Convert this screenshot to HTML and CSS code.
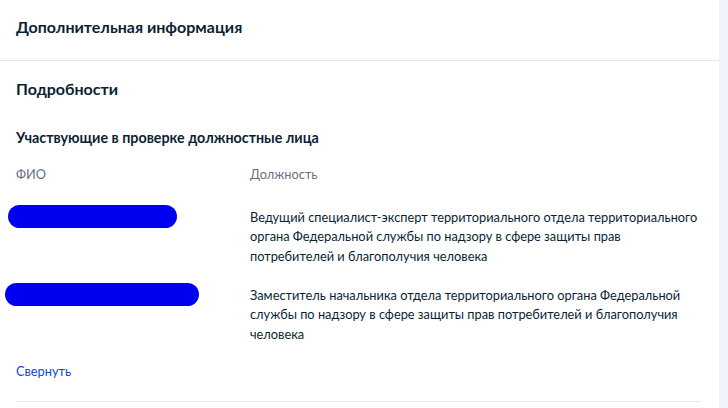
FILE: index.html
```html
<!DOCTYPE html>
<html lang="ru">
<head>
<meta charset="utf-8">
<link rel="stylesheet" href="styles.css">
</head>
<body>
<div class="page">
  <div class="card">
    <div class="head">Дополнительная информация</div>
    <div class="body">
      <h2 class="title">Подробности</h2>
      <h3 class="subtitle">Участвующие в проверке должностные лица</h3>
      <div class="grid">
        <div class="th">ФИО</div>
        <div class="th">Должность</div>
        <div class="cell name"><span class="blob blob1"></span></div>
        <div class="cell">Ведущий специалист-эксперт территориального отдела территориального органа Федеральной службы по надзору в сфере защиты прав потребителей и благополучия человека</div>
        <div class="cell name"><span class="blob blob2"></span></div>
        <div class="cell">Заместитель начальника отдела территориального органа Федеральной службы по надзору в сфере защиты прав потребителей и благополучия человека</div>
      </div>
      <a class="toggle" href="#">Свернуть</a>
      <div class="rule"></div>
    </div>
  </div>
  <div class="strip"></div>
</div>
</body>
</html>
```
FILE: styles.css
```css
* { box-sizing: border-box; margin: 0; padding: 0; }
html, body { width: 728px; height: 408px; overflow: hidden; background: #fff; }
body { font-family: Lato, "Noto Sans", sans-serif; color: #0b1f33; }
.page { display: flex; height: 408px; }
.card { width: 719px; background: #fff; }
.strip { flex: 1; background: #f1f4fb; }
.head {
  height: 61px;
  padding: 17px 16px 0;
  font-size: 16px;
  font-weight: 700;
  border-bottom: 1px solid #e3e8ee;
}
.body { padding: 0 0 0 16px; }
.title { font-size: 16px; font-weight: 700; margin-top: 18px; line-height: 20px; }
.subtitle { font-size: 14.3px; font-weight: 700; margin-top: 30px; line-height: 18px; }
.grid {
  display: grid;
  grid-template-columns: 234px 452px;
  margin-top: 18px;
  font-size: 12.8px;
  line-height: 19.5px;
}
.th { color: #66727f; padding-bottom: 23px; }
.cell { padding-bottom: 19.5px; }
.name { position: relative; }
.blob { position: absolute; display: block; background: #0000f0; border-radius: 12px; height: 23px; }
.blob1 { left: -8px; top: -3px; width: 169px; }
.blob2 { left: -11px; top: -2.5px; width: 194px; }
.toggle { display: block; color: #0d4cd3; text-decoration: none; font-size: 12.8px; line-height: 18px; margin-top: -2px; }
.rule { margin-top: 21px; width: 684px; border-top: 1px solid #e3e8ee; }
```
